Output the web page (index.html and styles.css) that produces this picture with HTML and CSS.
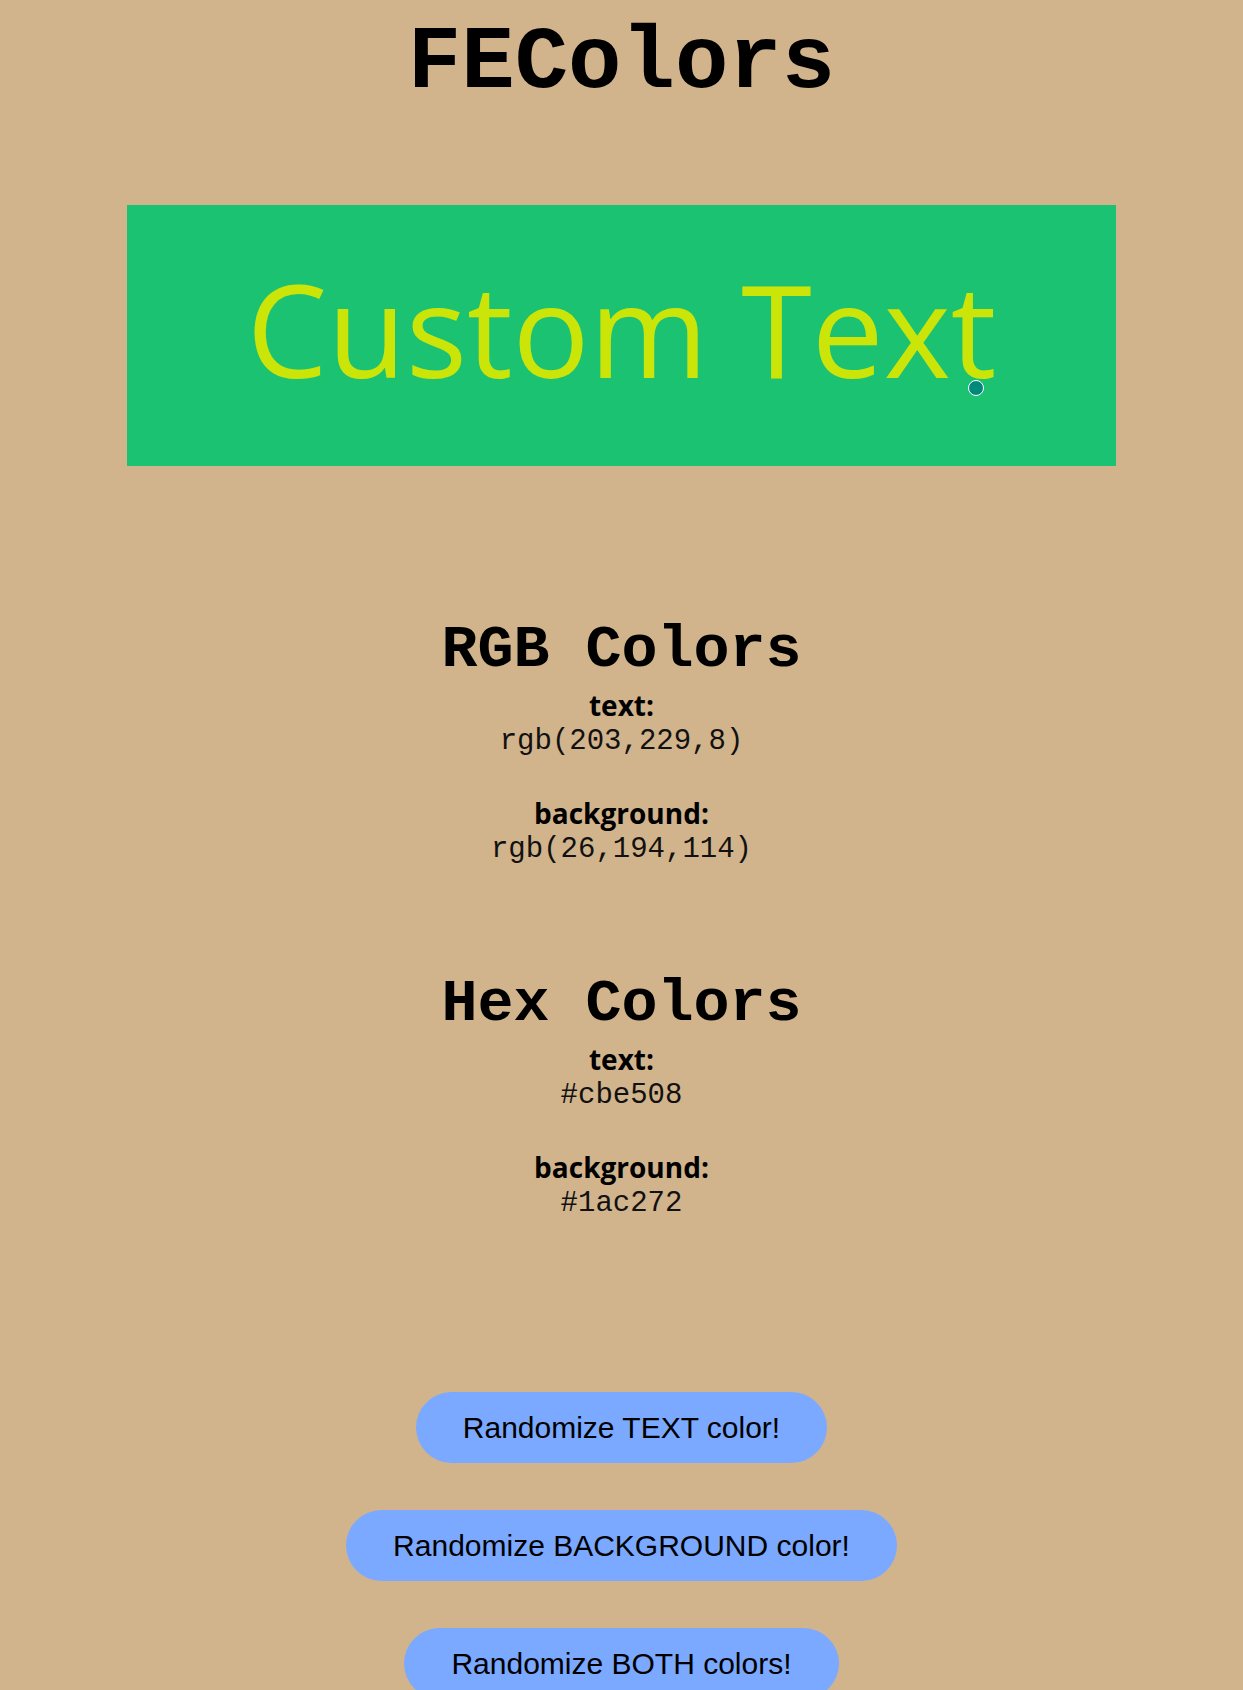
FILE: index.html
```html
<!DOCTYPE html>
<html lang="en">
<head>
<meta charset="utf-8">
<title>FEColors</title>
<link rel="stylesheet" href="styles.css">
</head>
<body>
<h1 class="title">FEColors</h1>
<div class="preview">
  <p class="preview-text">Custom Text</p>
  <span class="cursor-dot"></span>
</div>
<section class="colors colors-rgb">
  <h2 class="colors-heading">RGB Colors</h2>
  <div class="pair">
    <div class="label">text:</div>
    <div class="value">rgb(203,229,8)</div>
  </div>
  <div class="pair">
    <div class="label">background:</div>
    <div class="value">rgb(26,194,114)</div>
  </div>
</section>
<section class="colors colors-hex">
  <h2 class="colors-heading">Hex Colors</h2>
  <div class="pair">
    <div class="label">text:</div>
    <div class="value">#cbe508</div>
  </div>
  <div class="pair">
    <div class="label">background:</div>
    <div class="value">#1ac272</div>
  </div>
</section>
<div class="buttons">
  <button class="btn">Randomize TEXT color!</button>
  <button class="btn">Randomize BACKGROUND color!</button>
  <button class="btn">Randomize BOTH colors!</button>
</div>
</body>
</html>
```
FILE: styles.css
```css
html, body {
  margin: 0;
  padding: 0;
}
body {
  background: #d2b48c;
  color: #000;
  text-align: center;
  font-family: "Open Sans", "Noto Sans", sans-serif;
}
.title {
  margin: 14px 0 0;
  font-family: "Liberation Mono", "Courier New", monospace;
  font-weight: bold;
  font-size: 89px;
  line-height: 100px;
}
.preview {
  position: relative;
  width: 989px;
  margin: 91px auto 0;
  padding: 60px 0 73px;
  background: #1ac272;
}
.preview-text {
  margin: 0;
  color: #cbe508;
  font-family: "Open Sans", "Noto Sans", sans-serif;
  font-size: 128px;
  line-height: 128px;
}
.cursor-dot {
  position: absolute;
  left: 841px;
  top: 175px;
  width: 14px;
  height: 14px;
  border: 1.5px solid #ffffff;
  border-radius: 50%;
  background: #00897b;
}
.colors {
  display: flex;
  flex-direction: column;
  align-items: center;
}
.colors-rgb {
  margin-top: 154px;
}
.colors-hex {
  margin-top: 105px;
}
.colors-heading {
  margin: 0 0 7px;
  font-family: "Liberation Mono", "Courier New", monospace;
  font-weight: bold;
  font-size: 60px;
  line-height: 60px;
}
.pair + .pair {
  margin-top: 34px;
}
.label {
  font-family: "Open Sans", "Noto Sans", sans-serif;
  font-weight: bold;
  font-size: 28px;
  line-height: 36px;
}
.value {
  font-family: "Liberation Mono", "Courier New", monospace;
  font-size: 29px;
  line-height: 38px;
  color: #111;
}
.buttons {
  margin-top: 169px;
  display: flex;
  flex-direction: column;
  align-items: center;
  gap: 47px;
}
.btn {
  font-family: "Liberation Sans", Arial, sans-serif;
  font-size: 30px;
  line-height: 35px;
  padding: 18px 47px;
  border: none;
  border-radius: 36px;
  background: #7aa9ff;
  color: #000;
}
```
